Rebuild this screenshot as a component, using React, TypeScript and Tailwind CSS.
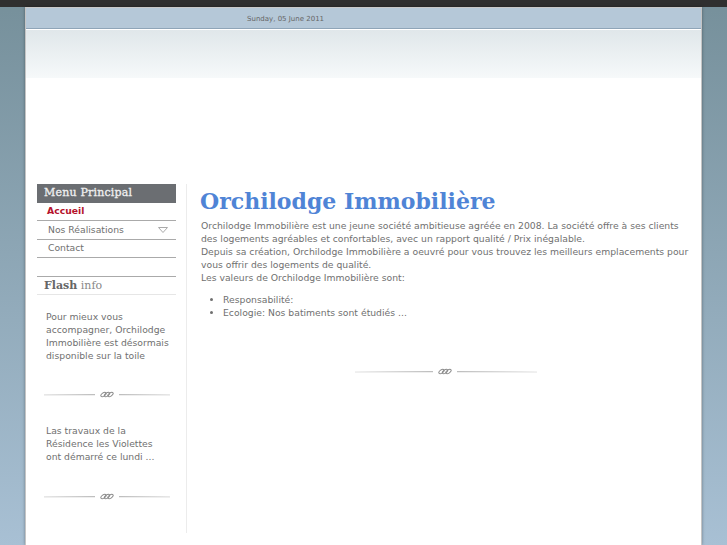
import React from 'react';

const sans = "font-['DejaVu_Sans',sans-serif]";
const serif = "font-['DejaVu_Serif',serif]";

const Ornament: React.FC<{ wide?: boolean }> = ({ wide }) => (
  <div className="flex items-center justify-center gap-[5px]">
    <div className={`h-[1px] shadow-[0_1px_0_#efefef] ${wide ? 'w-[78px] bg-gradient-to-r from-[#f2f2f2] to-[#bdbdbd]' : 'w-[51px] bg-gradient-to-r from-[#e8e8e8] to-[#bdbdbd]'}`} />
    <svg width="14" height="7" viewBox="0 0 14 7" fill="none" stroke="#8a8a8a" strokeWidth="1">
      <ellipse cx="3.500" cy="3.500" rx="3" ry="1.600" transform="rotate(-35 3.500 3.500)" />
      <ellipse cx="7" cy="3.500" rx="3" ry="1.600" transform="rotate(-35 7 3.500)" />
      <ellipse cx="10.500" cy="3.500" rx="3" ry="1.600" transform="rotate(-35 10.500 3.500)" />
    </svg>
    <div className={`h-[1px] shadow-[0_1px_0_#efefef] ${wide ? 'w-[80px] bg-gradient-to-r from-[#bdbdbd] to-[#f2f2f2]' : 'w-[51px] bg-gradient-to-r from-[#bdbdbd] to-[#e8e8e8]'}`} />
  </div>
);

const App: React.FC = () => {
  return (
    <div className={`h-[545px] w-[727px] overflow-hidden bg-gradient-to-b from-[#76909b] to-[#a8c0d4] ${sans}`}>
      <div className="h-[7px] bg-[#2f2f2f]" />
      <div className="mx-[25px] h-[538px] w-[677px] border-x border-t border-x-[#c4c4c4] border-t-[#c9c9c9] bg-white shadow-[0_0_3px_rgba(0,0,0,0.35)]">
        <div className="flex h-[21px] items-center border-b border-[#8fa5b8] bg-[#b5c8d8] pl-[221px] pt-[3px] text-[7px] text-[#666]">
          Sunday, 05 June 2011
        </div>
        <div className="mt-[1px] h-[48px] bg-gradient-to-b from-[#e0e7ea] to-[#f6f9fa]" />

        <div className="mt-[106px] flex pl-[11px]">
          <div className="w-[139px] shrink-0">
            <div className={`flex h-[19px] items-center bg-[#6b6e72] pl-[7px] text-[11px] tracking-[0.2px] text-[#f0f0f0] [-webkit-text-stroke:0.3px] ${serif}`}>
              Menu Principal
            </div>
            <div className="text-[9.250px] text-[#707070]">
              <div className="flex h-[18px] items-center border-b border-[#aaa] pb-[2px] pl-[10px] font-bold text-[#b5122b]">Accueil</div>
              <div className="flex h-[19px] items-center justify-between border-b border-[#aaa] pl-[11px] pr-[8px]">
                Nos Réalisations
                <svg width="10" height="6" viewBox="0 0 10 6" fill="none" stroke="#aaa"><path d="M.5.500h9L5 5.500z" /></svg>
              </div>
              <div className="flex h-[18px] items-center border-b border-[#aaa] pb-[2px] pl-[11px]">Contact</div>
            </div>

            <div className={`mt-[18px] flex h-[19px] items-center border-y border-t-[#aaa] border-b-[#e6e6e6] pl-[7px] pt-[2px] text-[11px] text-[#888] ${serif}`}>
              <span className="font-bold text-[#666]">Flash</span>&nbsp;info
            </div>

            <p className="mt-[15px] pl-[9px] text-[9.250px] leading-[13px] text-[#707070]">
              Pour mieux vous<br />accompagner, Orchilodge<br />Immobilière est désormais<br />disponible sur la toile
            </p>
            <div className="mt-[29px]"><Ornament /></div>
            <p className="mt-[26px] pl-[9px] text-[9.250px] leading-[13px] text-[#707070]">
              Las travaux de la<br />Résidence les Violettes<br />ont démarré ce lundi ...
            </p>
            <div className="mt-[30px]"><Ornament /></div>
          </div>

          <div className="ml-[10px] h-[349px] w-[1px] shrink-0 bg-[#ececec]" />

          <div className="ml-[13px] flex-1 pr-[8px]">
            <h1 className={`text-[22px] leading-[34px] font-bold text-[#4f84d6] ${serif}`}>Orchilodge Immobilière</h1>
            <p className="pl-[1px] pt-[1px] text-[9.250px] leading-[13px] text-[#707070]">
              Orchilodge Immobilière est une jeune société ambitieuse agréée en 2008. La société offre à ses clients<br />
              des logements agréables et confortables, avec un rapport qualité / Prix inégalable.<br />
              Depuis sa création, Orchilodge Immobilière a oeuvré pour vous trouvez les meilleurs emplacements pour<br />
              vous offrir des logements de qualité.<br />
              Les valeurs de Orchilodge Immobilière sont:
            </p>
            <ul className="mt-[9px] list-disc pl-[23px] text-[9.250px] leading-[13px] text-[#707070]">
              <li>Responsabilité:</li>
              <li>Ecologie: Nos batiments sont étudiés ...</li>
            </ul>
            <div className="mt-[49px] pr-[2px]"><Ornament wide /></div>
          </div>
        </div>
      </div>
    </div>
  );
};

export default App;
